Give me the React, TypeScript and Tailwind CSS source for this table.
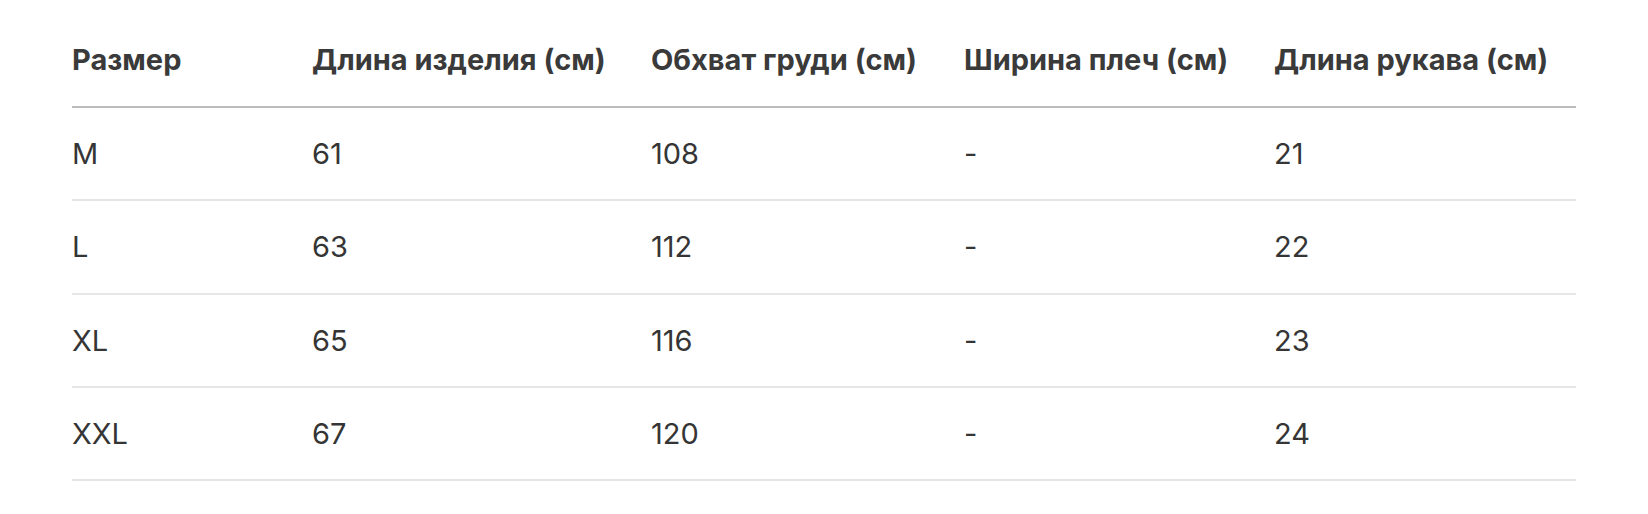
const headers = ['Размер', 'Длина изделия (см)', 'Обхват груди (см)', 'Ширина плеч (см)', 'Длина рукава (см)'];

const rows = [
  ['M', '61', '108', '-', '21'],
  ['L', '63', '112', '-', '22'],
  ['XL', '65', '116', '-', '23'],
  ['XXL', '67', '120', '-', '24'],
];

const cols = 'grid grid-cols-[240px_339px_313px_310px_302px]';

export default function App() {
  return (
    <div className="min-h-[514px] bg-white pt-[14px] pl-[72px] text-[#353535]" style={{ fontFamily: 'Inter, "Noto Sans", sans-serif' }}>
      <div className="w-[1504px]">
        <div className={`${cols} h-[94px] items-center border-b-2 border-[#bcbcbc] text-[29px] font-bold text-[#3a3a3a]`}>
          {headers.map((h) => (
            <div key={h}>{h}</div>
          ))}
        </div>
        {rows.map((r) => (
          <div key={r[0]} className={`${cols} h-[93.33px] items-center border-b-2 border-[#e6e6e6] text-[29px]`}>
            {r.map((c, i) => (
              <div key={i}>{c}</div>
            ))}
          </div>
        ))}
      </div>
    </div>
  );
}
